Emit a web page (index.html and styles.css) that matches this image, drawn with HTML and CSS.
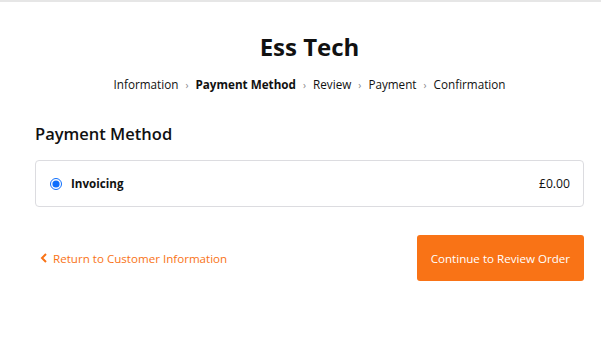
FILE: index.html
```html
<!DOCTYPE html>
<html>
<head>
    <title>Ess Tech - Payment Method</title>
    <link rel="stylesheet" href="styles.css">
</head>
<body>
    <div class="page">
        <header class="header">
            <h1 class="shop-name">Ess Tech</h1>
            <nav class="steps">
                <span>Information</span>
                <span class="sep">&rsaquo;</span>
                <span class="current">Payment Method</span>
                <span class="sep">&rsaquo;</span>
                <span>Review</span>
                <span class="sep">&rsaquo;</span>
                <span>Payment</span>
                <span class="sep">&rsaquo;</span>
                <span>Confirmation</span>
            </nav>
        </header>

        <h2 class="section-title">Payment Method</h2>
        <div class="method-card">
            <label class="method">
                <input type="radio" name="method" checked>
                <span class="method-name">Invoicing</span>
            </label>
            <span class="method-price">&pound;0.00</span>
        </div>

        <div class="actions">
            <a href="#" class="back-link">
                <svg width="8" height="10" viewBox="0 0 8 10"><path d="M6 1 L2 5 L6 9" fill="none" stroke="currentColor" stroke-width="2"/></svg>
                Return to Customer Information
            </a>
            <button class="continue">Continue to Review Order</button>
        </div>
    </div>
</body>
</html>
```

FILE: styles.css
```css
body {
    margin: 0;
    background: #fff;
    border-top: 2px solid #e6e6e6;
    font-family: "Open Sans", "Noto Sans", sans-serif;
    color: #111;
}

.page {
    padding: 0 17px 0 35px;
}

.header {
    text-align: center;
    padding-top: 29px;
}

.shop-name {
    margin: 0;
    font-size: 24px;
    font-weight: 700;
    line-height: 32px;
}

.steps {
    margin-top: 12px;
    font-size: 11.7px;
    line-height: 18px;
}

.steps .sep {
    color: #888;
    font-size: 10px;
    margin: 0 4px;
}

.steps .current {
    font-weight: 700;
}

.section-title {
    margin: 28px 0 0;
    font-size: 16.5px;
    font-weight: 600;
    line-height: 24px;
}

.method-card {
    margin-top: 14px;
    height: 45px;
    border: 1px solid #dcdce0;
    border-radius: 4px;
    display: flex;
    align-items: center;
    justify-content: space-between;
    padding: 0 13px 0 14px;
}

.method {
    display: flex;
    align-items: center;
    gap: 9px;
}

.method input {
    margin: 0;
    width: 12px;
    height: 12px;
    accent-color: #0d6efd;
}

.method-name {
    font-size: 11.6px;
    font-weight: 700;
}

.method-price {
    font-size: 12.2px;
}

.actions {
    margin-top: 28px;
    display: flex;
    justify-content: space-between;
    align-items: center;
}

.back-link {
    color: #f97316;
    text-decoration: none;
    font-size: 11.6px;
    display: flex;
    align-items: center;
    gap: 5px;
    padding-left: 5px;
}

.continue {
    background: #f97316;
    color: #fff;
    border: none;
    border-radius: 3px;
    height: 46px;
    padding: 0 14px;
    font-family: inherit;
    font-size: 11.6px;
}
```
